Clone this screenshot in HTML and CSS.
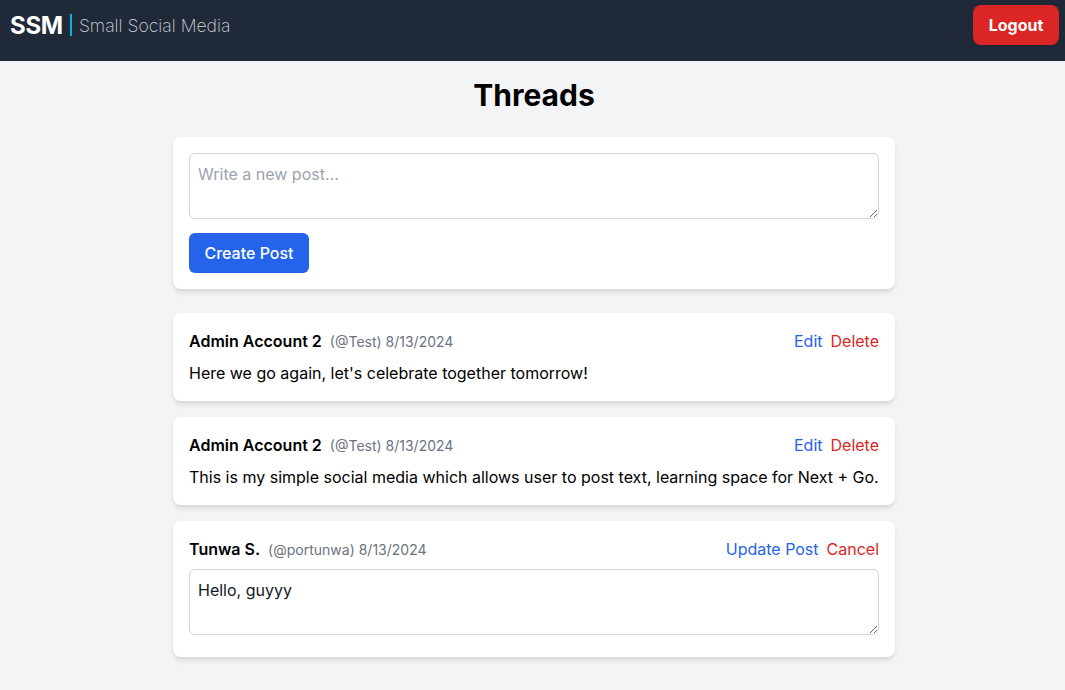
FILE: index.html
```html
<!DOCTYPE html>
<html lang="en">
<head>
<meta charset="utf-8">
<title>Small Social Media</title>
<link rel="stylesheet" href="styles.css">
</head>
<body>
<header class="topbar">
  <div class="brand">
    <span class="brand-short">SSM</span>
    <span class="brand-divider"></span>
    <span class="brand-name">Small Social Media</span>
  </div>
  <button class="logout">Logout</button>
</header>
<div class="page">
<main class="container">
  <h1 class="title">Threads</h1>
  <section class="card composer">
    <textarea class="field" rows="2" placeholder="Write a new post..."></textarea>
    <button class="primary">Create Post</button>
  </section>
  <div class="posts">
    <article class="card post">
      <div class="post-head">
        <div class="meta"><span class="name">Admin Account 2</span><span class="handle">(@Test) 8/13/2024</span></div>
        <div class="actions"><a class="link blue">Edit</a><a class="link red">Delete</a></div>
      </div>
      <p class="body">Here we go again, let's celebrate together tomorrow!</p>
    </article>
    <article class="card post">
      <div class="post-head">
        <div class="meta"><span class="name">Admin Account 2</span><span class="handle">(@Test) 8/13/2024</span></div>
        <div class="actions"><a class="link blue">Edit</a><a class="link red">Delete</a></div>
      </div>
      <p class="body">This is my simple social media which allows user to post text, learning space for Next + Go.</p>
    </article>
    <article class="card post editing">
      <div class="post-head">
        <div class="meta"><span class="name">Tunwa S.</span><span class="handle">(@portunwa) 8/13/2024</span></div>
        <div class="actions"><a class="link blue">Update Post</a><a class="link red">Cancel</a></div>
      </div>
      <textarea class="field edit-field" rows="2">Hello, guyyy</textarea>
    </article>
  </div>
</main>
</div>
</body>
</html>
```
FILE: styles.css
```css
* { box-sizing: border-box; }
html, body { margin: 0; padding: 0; }
body {
  background: #f3f4f6;
  font-family: Inter, "Noto Sans", sans-serif;
  color: #111827;
  height: 690px;
  overflow: hidden;
}
.topbar {
  height: 61px;
  background: #1f2937;
  display: flex;
  justify-content: space-between;
  align-items: flex-start;
  padding: 5px 6px 0 10px;
}
.brand {
  height: 40px;
  display: flex;
  align-items: center;
}
.brand-short {
  color: #fff;
  font-weight: 700;
  font-size: 24px;
  letter-spacing: -0.3px;
}
.brand-divider {
  width: 2px;
  height: 22px;
  background: #06b6d4;
  margin: 0 7px 0 7px;
}
.brand-name {
  color: #d1d5db;
  font-weight: 200;
  font-size: 17.6px;
}
.logout {
  height: 40px;
  width: 86px;
  border: none;
  border-radius: 8px;
  background: #dc2626;
  color: #fff;
  font-family: inherit;
  font-weight: 700;
  font-size: 16px;
}
.page {
  padding-left: 3px;
}
.container {
  width: 722px;
  margin: 0 auto;
  padding-top: 16px;
}
.title {
  margin: 0 0 24px;
  text-align: center;
  font-size: 30px;
  line-height: 36px;
  font-weight: 700;
  color: #000;
}
.card {
  background: #fff;
  border-radius: 8px;
  box-shadow: 0 4px 6px -1px rgba(0,0,0,0.1), 0 2px 4px -2px rgba(0,0,0,0.1);
  padding: 16px;
}
.composer {
  display: flex;
  flex-direction: column;
  align-items: flex-start;
  gap: 14px;
  margin-bottom: 24px;
}
.field {
  display: block;
  width: 100%;
  height: 66px;
  border: 1px solid #d1d5db;
  border-radius: 6px;
  padding: 8px;
  font-family: inherit;
  font-size: 16px;
  line-height: 24px;
  color: #111827;
  resize: vertical;
  background: #fff;
}
.field::placeholder { color: #9ca3af; }
.primary {
  height: 40px;
  width: 120px;
  border: none;
  border-radius: 6px;
  background: #2563eb;
  color: #fff;
  font-family: inherit;
  font-size: 16px;
  font-weight: 500;
}
.posts {
  display: flex;
  flex-direction: column;
  gap: 16px;
}
.post-head {
  display: flex;
  justify-content: space-between;
  align-items: center;
  height: 24px;
}
.meta { display: flex; align-items: baseline; }
.name {
  font-weight: 600;
  font-size: 16px;
  color: #000;
}
.handle {
  margin-left: 8px;
  font-size: 14px;
  color: #6b7280;
}
.actions { display: flex; gap: 8px; font-size: 16px; }
.link { cursor: pointer; }
.blue { color: #2563eb; }
.red { color: #dc2626; }
.body {
  margin: 8px 0 0;
  font-size: 16px;
  line-height: 24px;
  color: #000;
}
.edit-field {
  margin-top: 8px;
  margin-bottom: 6px;
}
```
